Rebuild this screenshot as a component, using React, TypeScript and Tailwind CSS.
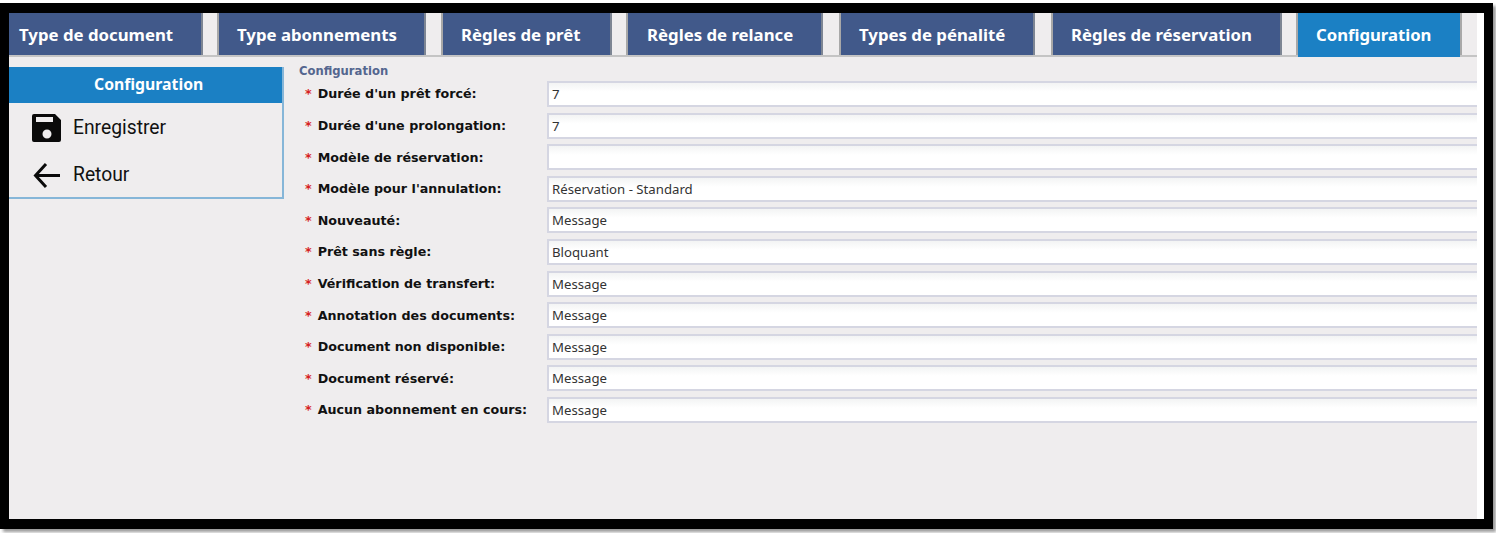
import React from 'react';

const tabs = [
  { label: 'Type de document', width: 'w-[194px]', pad: 'pl-[10px]', gap: 'w-[16px]' },
  { label: 'Type abonnements', width: 'w-[207px]', pad: 'pl-[18px]', gap: 'w-[17px]' },
  { label: 'Règles de prêt', width: 'w-[169px]', pad: 'pl-[18px]', gap: 'w-[16px]' },
  { label: 'Règles de relance', width: 'w-[195px]', pad: 'pl-[19px]', gap: 'w-[18px]' },
  { label: 'Types de pénalité', width: 'w-[194px]', pad: 'pl-[18px]', gap: 'w-[18px]' },
  { label: 'Règles de réservation', width: 'w-[229px]', pad: 'pl-[18px]', gap: 'w-[16px]' },
];

const fields = [
  { label: "Durée d'un prêt forcé:", value: '7' },
  { label: "Durée d'une prolongation:", value: '7' },
  { label: 'Modèle de réservation:', value: '' },
  { label: "Modèle pour l'annulation:", value: 'Réservation - Standard' },
  { label: 'Nouveauté:', value: 'Message' },
  { label: 'Prêt sans règle:', value: 'Bloquant' },
  { label: 'Vérification de transfert:', value: 'Message' },
  { label: 'Annotation des documents:', value: 'Message' },
  { label: 'Document non disponible:', value: 'Message' },
  { label: 'Document réservé:', value: 'Message' },
  { label: 'Aucun abonnement en cours:', value: 'Message' },
];

const SaveIcon = () => (
  <svg width="30" height="30" viewBox="0 0 30 30" fill="#0a0a0a">
    <path
      fillRule="evenodd"
      d="M2 1h21l6 6v20a2 2 0 0 1-2 2H2a2 2 0 0 1-2-2V3a2 2 0 0 1 2-2zM4 4v5h17V4zM15 16.500a4.500 4.500 0 1 0 0 9 4.500 4.500 0 0 0 0-9z"
    />
  </svg>
);

const BackIcon = () => (
  <svg width="30" height="30" viewBox="0 0 30 30" fill="none" stroke="#0a0a0a" strokeWidth="3">
    <path d="M28 15.500H5M14 4 3.500 15.500 14 27" />
  </svg>
);

export default function App() {
  return (
    <div className="w-[1496px] h-[533px] bg-white pt-[3px] overflow-hidden">
      {/* Frame */}
      <div className="w-[1493px] h-[526px] border-x-[9px] border-t-[10px] border-b-[10px] border-black shadow-[3px_3px_3px_#9a9a9a] bg-white pr-[7px]">
        <div className="h-full bg-[#efedee] font-['Noto_Sans',sans-serif]">
          {/* Tabs */}
          <div className="flex h-[44px] border-b-2 border-[#c4c4c4]">
            {tabs.map((tab) => (
              <React.Fragment key={tab.label}>
                <div
                  className={`${tab.width} ${tab.pad} h-[42px] pt-[1px] bg-[#41598a] border-r-2 border-[#7d8593] flex items-center text-white font-bold text-[16.800px] whitespace-nowrap`}
                >
                  {tab.label}
                </div>
                <div className={`${tab.gap} border-r-2 border-[#a8a8a8]`} />
              </React.Fragment>
            ))}
            <div className="w-[162px] h-[44px] bg-[#1b80c4] flex items-center pl-[18px] text-white font-bold text-[16.700px]">
              Configuration
            </div>
            <div className="w-[2px] h-[42px] bg-[#a8a8a8]" />
          </div>

          <div className="flex pt-[10px]">
            {/* Side menu */}
            <div className="w-[275px] h-[132px] border-r-2 border-b-2 border-[#86b6d8] shrink-0">
              <div className="h-[36px] bg-[#1b80c4] flex items-center pl-[85px] text-white font-bold text-[15.800px]">
                Configuration
              </div>
              <div className="flex flex-col gap-[17px] pl-[23px] pt-[10px] font-['Roboto',sans-serif] text-[19.300px] text-[#111]">
                <div className="flex items-center gap-[11px] h-[30px]">
                  <SaveIcon />
                  <span>Enregistrer</span>
                </div>
                <div className="flex items-center gap-[11px] h-[30px]">
                  <BackIcon />
                  <span>Retour</span>
                </div>
              </div>
            </div>

            {/* Form */}
            <div className="flex-1 pl-[15px] -mt-[4px]">
              <div className="pt-[1px] font-bold text-[11.600px] leading-[15px] text-[#54668f] font-['DejaVu_Sans',sans-serif]">
                Configuration
              </div>
              <div className="flex flex-col gap-[5.6px] mt-[2px]">
                {fields.map((field) => (
                  <div key={field.label} className="flex items-center h-[26px]">
                    <div className="w-[248px] pl-[6px] flex gap-[6px] font-['DejaVu_Sans',sans-serif] font-bold text-[12.700px] text-[#111] whitespace-nowrap">
                      <span className="text-[#d62020]">*</span>
                      {field.label}
                    </div>
                    <div className="flex-1 h-full bg-gradient-to-b from-[#f3f4f4] to-white to-[40%] border-l-2 border-y-2 border-[#d5d6e2] pl-[3px] pt-[2px] flex items-center font-['Noto_Sans',sans-serif] text-[13.200px] text-[#333]">
                      {field.value}
                    </div>
                  </div>
                ))}
              </div>
            </div>
          </div>
        </div>
      </div>
    </div>
  );
}
